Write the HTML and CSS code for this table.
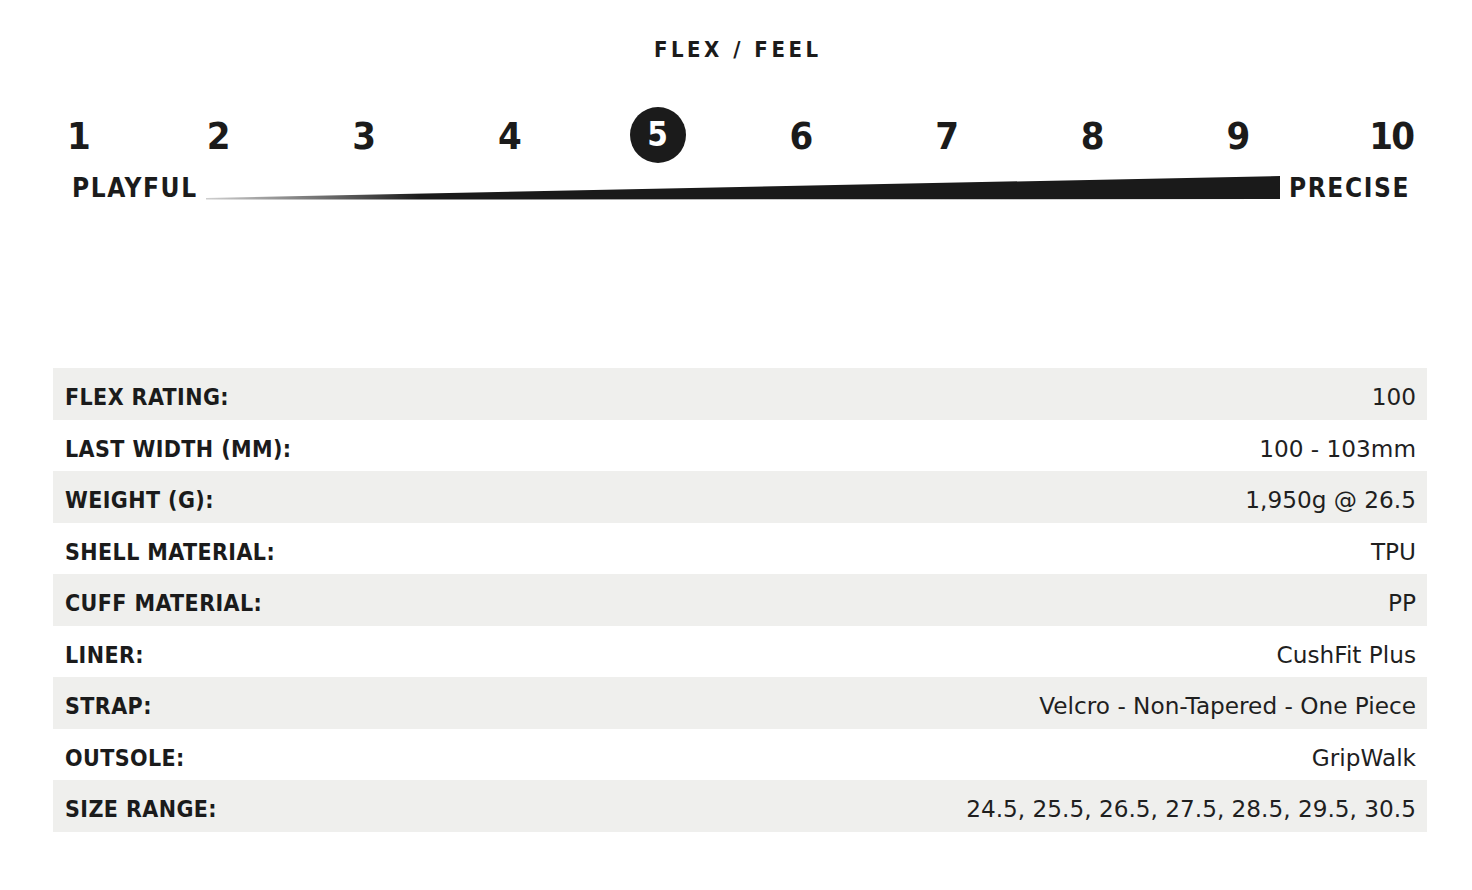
FILE: index.html
```html
<!DOCTYPE html>
<html lang="en">
<head>
<meta charset="utf-8">
<title>Flex / Feel</title>
<link rel="stylesheet" href="styles.css">
</head>
<body>
<div class="page">
  <section class="flex-feel">
    <h2 class="title">FLEX / FEEL</h2>
    <div class="scale">
      <span class="num">1</span>
      <span class="num">2</span>
      <span class="num">3</span>
      <span class="num">4</span>
      <span class="num"><span class="active">5</span></span>
      <span class="num">6</span>
      <span class="num">7</span>
      <span class="num">8</span>
      <span class="num">9</span>
      <span class="num">10</span>
    </div>
    <div class="range">
      <span class="end">PLAYFUL</span>
      <svg class="wedge" viewBox="0 0 1073 26" preserveAspectRatio="none">
        <defs>
          <linearGradient id="fade" x1="0" x2="1" y1="0" y2="0">
            <stop offset="0" stop-color="#cfcfcf"/>
            <stop offset="0.1" stop-color="#777"/>
            <stop offset="0.2" stop-color="#1a1a1a"/>
            <stop offset="1" stop-color="#1a1a1a"/>
          </linearGradient>
        </defs>
        <polygon points="0,23 1073,1 1073,24 0,24.6" fill="url(#fade)"/>
      </svg>
      <span class="end end-right">PRECISE</span>
    </div>
  </section>

  <section class="specs">
    <div class="row"><span class="label">FLEX RATING:</span><span class="value">100</span></div>
    <div class="row"><span class="label">LAST WIDTH (MM):</span><span class="value">100 - 103mm</span></div>
    <div class="row"><span class="label">WEIGHT (G):</span><span class="value">1,950g @ 26.5</span></div>
    <div class="row"><span class="label">SHELL MATERIAL:</span><span class="value">TPU</span></div>
    <div class="row"><span class="label">CUFF MATERIAL:</span><span class="value">PP</span></div>
    <div class="row"><span class="label">LINER:</span><span class="value">CushFit Plus</span></div>
    <div class="row"><span class="label">STRAP:</span><span class="value">Velcro - Non-Tapered - One Piece</span></div>
    <div class="row"><span class="label">OUTSOLE:</span><span class="value">GripWalk</span></div>
    <div class="row"><span class="label">SIZE RANGE:</span><span class="value">24.5, 25.5, 26.5, 27.5, 28.5, 29.5, 30.5</span></div>
  </section>
</div>
</body>
</html>
```

FILE: styles.css
```css
* {
  box-sizing: border-box;
}

html, body {
  margin: 0;
  padding: 0;
  background: #ffffff;
}

body {
  font-family: "DejaVu Sans Condensed", "Liberation Sans", sans-serif;
  color: #1b1b1b;
}

.page {
  width: 1472px;
  padding-top: 39px;
}

.title {
  margin: 0;
  text-align: center;
  font-family: "DejaVu Sans Condensed", "Liberation Sans", sans-serif;
  font-size: 22px;
  line-height: 22px;
  font-weight: 700;
  letter-spacing: 3.5px;
  padding-left: 3.5px;
}

.scale {
  margin-top: 47px;
  width: 1457px;
  display: grid;
  grid-template-columns: repeat(10, 1fr);
  align-items: center;
  height: 56px;
}

.num {
  display: flex;
  justify-content: center;
  align-items: center;
  font-family: "DejaVu Sans Condensed", "Liberation Sans", sans-serif;
  font-size: 38px;
  line-height: 56px;
  font-weight: 700;
  color: #1b1b1b;
}

.num:first-child {
  padding-left: 12px;
}

.num:last-child {
  padding-left: 14px;
  letter-spacing: -2px;
}

.active {
  width: 56px;
  height: 56px;
  border-radius: 50%;
  background: #1b1b1b;
  color: #ffffff;
  font-size: 33px;
  line-height: 56px;
  text-align: center;
  margin-left: 4px;
  margin-top: -2px;
}

.range {
  margin-top: 11px;
  margin-left: 72px;
  width: 1338px;
  display: flex;
  align-items: flex-end;
  height: 26px;
}

.end {
  font-family: "DejaVu Sans Condensed", "Liberation Sans", sans-serif;
  font-size: 26px;
  line-height: 26px;
  font-weight: 700;
  letter-spacing: 1.6px;
  white-space: nowrap;
}

.wedge {
  flex: 1;
  height: 26px;
  margin: 0 9px 0 8px;
  display: block;
}

.specs {
  margin-top: 167px;
  margin-left: 53px;
  width: 1374px;
}

.row {
  height: 51.5px;
  display: flex;
  justify-content: space-between;
  align-items: baseline;
  padding: 17px 11px 0 12px;
}

.row:nth-child(odd) {
  background: #efefed;
}

.label {
  font-family: "DejaVu Sans Condensed", "Liberation Sans", sans-serif;
  font-size: 23px;
  line-height: 23px;
  font-weight: 700;
  letter-spacing: 0.4px;
  color: #1b1b1b;
}

.value {
  font-family: "DejaVu Sans", sans-serif;
  font-size: 23.2px;
  line-height: 23px;
  color: #1f1f1f;
}
```
